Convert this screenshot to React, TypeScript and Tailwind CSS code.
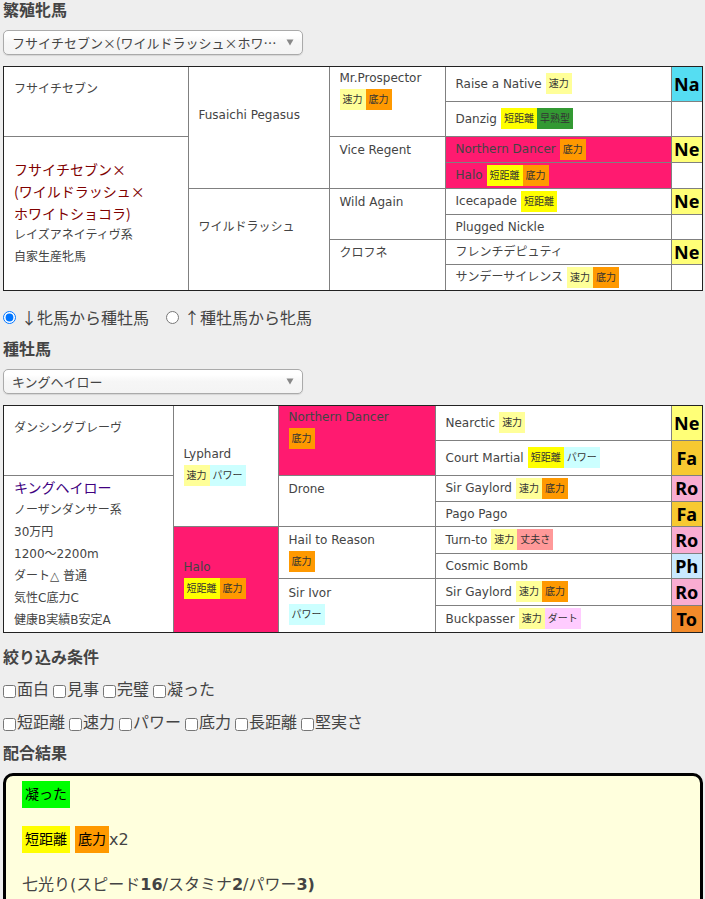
import { useState } from "react";

type Factor = '速力' | '底力' | '短距離' | '早熟型' | 'パワー' | '丈夫さ' | 'ダート';

type Ancestor = {
    name: string;
    factors?: Factor[];
    cross?: boolean;
};

type Row = Ancestor & {
    height: string;
    line?: string;
};

const factorColor: Record<Factor, string> = {
    '速力': 'bg-[#ffff99]',
    '底力': 'bg-[#ff9900]',
    '短距離': 'bg-[#ffff00]',
    '早熟型': 'bg-[#339933]',
    'パワー': 'bg-[#ccffff]',
    '丈夫さ': 'bg-[#ff9999]',
    'ダート': 'bg-[#ffccff]',
};

const lineColor: Record<string, string> = {
    Na: 'bg-[#55ddf2]',
    Ne: 'bg-[#ffff77]',
    Fa: 'bg-[#f7c931]',
    Ro: 'bg-[#f9add2]',
    Ph: 'bg-[#c9e9ff]',
    To: 'bg-[#f28a2a]',
};

const mareRows: Row[] = [
    { name: 'Raise a Native', factors: ['速力'], line: 'Na', height: 'h-[34px]' },
    { name: 'Danzig', factors: ['短距離', '早熟型'], height: 'h-[35px]' },
    { name: 'Northern Dancer', factors: ['底力'], cross: true, line: 'Ne', height: 'h-[26px]' },
    { name: 'Halo', factors: ['短距離', '底力'], cross: true, height: 'h-[26px]' },
    { name: 'Icecapade', factors: ['短距離'], line: 'Ne', height: 'h-[26px]' },
    { name: 'Plugged Nickle', height: 'h-[25px]' },
    { name: 'フレンチデピュティ', line: 'Ne', height: 'h-[25px]' },
    { name: 'サンデーサイレンス', factors: ['速力', '底力'], height: 'h-[26px]' },
];

const mareThird: Ancestor[] = [
    { name: 'Mr.Prospector', factors: ['速力', '底力'] },
    { name: 'Vice Regent' },
    { name: 'Wild Again' },
    { name: 'クロフネ' },
];

const mareSecond: Ancestor[] = [
    { name: 'Fusaichi Pegasus' },
    { name: 'ワイルドラッシュ' },
];

const sireRows: Row[] = [
    { name: 'Nearctic', factors: ['速力'], line: 'Ne', height: 'h-[34px]' },
    { name: 'Court Martial', factors: ['短距離', 'パワー'], line: 'Fa', height: 'h-[35px]' },
    { name: 'Sir Gaylord', factors: ['速力', '底力'], line: 'Ro', height: 'h-[26px]' },
    { name: 'Pago Pago', line: 'Fa', height: 'h-[25px]' },
    { name: 'Turn-to', factors: ['速力', '丈夫さ'], line: 'Ro', height: 'h-[27px]' },
    { name: 'Cosmic Bomb', line: 'Ph', height: 'h-[25px]' },
    { name: 'Sir Gaylord', factors: ['速力', '底力'], line: 'Ro', height: 'h-[27px]' },
    { name: 'Buckpasser', factors: ['速力', 'ダート'], line: 'To', height: 'h-[27px]' },
];

const sireThird: Ancestor[] = [
    { name: 'Northern Dancer', factors: ['底力'], cross: true },
    { name: 'Drone' },
    { name: 'Hail to Reason', factors: ['底力'] },
    { name: 'Sir Ivor', factors: ['パワー'] },
];

const sireSecond: Ancestor[] = [
    { name: 'Lyphard', factors: ['速力', 'パワー'] },
    { name: 'Halo', factors: ['短距離', '底力'], cross: true },
];

function Factors({ list }: { list?: Factor[] }) {
    return (
        <span className="flex">
            {list?.map((f) => (
                <span key={f} className={'h-[21px] px-[3px] text-[10px] leading-[21px] text-[#333] ' + factorColor[f]}>{f}</span>
            ))}
        </span>
    );
}

function AncestorCell({ data, span, tall }: { data: Ancestor; span: number; tall?: boolean }) {
    return (
        <td rowSpan={span} className={'border border-[#808080] py-0 pl-[10px] pr-0 align-middle ' + (data.cross ? 'bg-[#ff1a70]' : 'bg-white')}>
            <div className={tall ? 'h-[68px]' : 'h-[46px]'}>
                <div>{data.name}</div>
                <Factors list={data.factors} />
            </div>
        </td>
    );
}

type PedigreeProps = {
    label: string;
    father: string;
    rows: Row[];
    second: Ancestor[];
    third: Ancestor[];
    cols: string[];
    children: React.ReactNode;
};

function Pedigree({ label, father, rows, second, third, cols, children }: PedigreeProps) {
    return (
        <div className="border border-[#222] bg-white">
            <table aria-label={label} className="w-full table-fixed border-collapse border-hidden text-xs leading-[22px]">
                <colgroup>
                    {cols.map((c, i) => <col key={i} className={c} />)}
                </colgroup>
                <tbody>
                    {rows.map((row, i) => (
                        <tr key={i} className={row.height}>
                            {i === 0 && <AncestorCell data={{ name: father }} span={2} />}
                            {i === 2 && (
                                <td rowSpan={6} className="border border-[#808080] py-0 pl-[10px] pr-0 align-middle">{children}</td>
                            )}
                            {i % 4 === 0 && <AncestorCell data={second[i / 4]} span={4} />}
                            {i % 2 === 0 && <AncestorCell data={third[i / 2]} span={2} tall={i === 0} />}
                            <td className={'border border-[#808080] py-0 pl-[10px] pr-0 ' + (row.cross ? 'bg-[#ff1a70]' : '')}>
                                <div className="flex items-center gap-1">
                                    <span>{row.name}</span>
                                    <Factors list={row.factors} />
                                </div>
                            </td>
                            <td className={'border border-[#808080] p-0 text-center font-["Noto_Sans",sans-serif] text-lg leading-[22px] font-bold text-black ' + (row.line ? lineColor[row.line] : '')}>
                                {row.line}
                            </td>
                        </tr>
                    ))}
                </tbody>
            </table>
        </div>
    );
}

function HorseSelect({ label, options }: { label: string; options: string[] }) {
    return (
        <div className="relative mt-2 mb-[11px] h-[25px] w-[300px]">
            <select aria-label={label} className='h-full w-full appearance-none rounded-[5px] border border-[#aaa] bg-linear-to-b from-white from-20% via-[#f6f6f6] via-50% to-[#f4f4f4] pl-2 pr-5 font-["Noto_Sans_CJK_JP",sans-serif] text-[13px] text-[#444] shadow-[0_1px_1px_rgba(0,0,0,0.1)]'>
                {options.map((o) => <option key={o}>{o}</option>)}
            </select>
            <svg className="pointer-events-none absolute top-[9px] right-[9px]" width="8" height="7" viewBox="0 0 8 7">
                <path d="M0.5 0.5H7.5L4 6.5Z" fill="#888" />
            </svg>
        </div>
    );
}

function Checks({ items }: { items: string[] }) {
    return (
        <div className="flex flex-wrap gap-x-1">
            {items.map((item) => (
                <label key={item} className="flex items-center gap-px">
                    <input type="checkbox" className="m-0 mt-[2px] h-[13px] w-[13px]" />
                    {item}
                </label>
            ))}
        </div>
    );
}

export default function App() {
    const [direction, setDirection] = useState('down');

    return (
        <div className='min-h-screen bg-[#eee] pr-[2px] pb-4 pl-[3px] font-["DejaVu_Sans","Noto_Sans_CJK_JP",sans-serif] text-base leading-6 text-[#444]' lang="ja">
            <h2 className="leading-[22px] font-bold">繁殖牝馬</h2>
            <HorseSelect label="繁殖牝馬" options={['フサイチセブン×(ワイルドラッシュ×ホワ…']} />
            <Pedigree
                label="繁殖牝馬の血統表"
                father="フサイチセブン"
                rows={mareRows}
                second={mareSecond}
                third={mareThird}
                cols={['w-[184px]', 'w-[141px]', 'w-[116px]', 'w-auto', 'w-[31px]']}
            >
                <div className='font-["Noto_Sans_CJK_JP",sans-serif] text-sm leading-[22px] text-[#800000]'>
                    フサイチセブン×<br />(ワイルドラッシュ×<br />ホワイトショコラ)
                </div>
                <div>レイズアネイティヴ系</div>
                <div>自家生産牝馬</div>
            </Pedigree>

            <div className='mt-[14px] flex gap-[17px] font-["Noto_Sans_CJK_JP",sans-serif]'>
                <label className="flex items-center gap-[5px]">
                    <input type="radio" name="direction" className="m-0 h-[13px] w-[13px]" checked={direction === 'down'} onChange={() => setDirection('down')} />
                    ↓牝馬から種牡馬
                </label>
                <label className="flex items-center gap-[5px]">
                    <input type="radio" name="direction" className="m-0 h-[13px] w-[13px]" checked={direction === 'up'} onChange={() => setDirection('up')} />
                    ↑種牡馬から牝馬
                </label>
            </div>

            <h2 className="mt-[10px] leading-[22px] font-bold">種牡馬</h2>
            <HorseSelect label="種牡馬" options={['キングヘイロー']} />
            <Pedigree
                label="種牡馬の血統表"
                father="ダンシングブレーヴ"
                rows={sireRows}
                second={sireSecond}
                third={sireThird}
                cols={['w-[169px]', 'w-[105px]', 'w-[157px]', 'w-auto', 'w-[31px]']}
            >
                <div className="text-sm leading-[22px] text-[#400080]">キングヘイロー</div>
                <div>ノーザンダンサー系</div>
                <div>30万円</div>
                <div>1200～2200m</div>
                <div>ダート△ 普通</div>
                <div>気性C底力C</div>
                <div>健康B実績B安定A</div>
            </Pedigree>

            <h2 className="mt-[14px] leading-[22px] font-bold">絞り込み条件</h2>
            <div className="mt-[9px] flex flex-col gap-[9px]">
                <Checks items={['面白', '見事', '完璧', '凝った']} />
                <Checks items={['短距離', '速力', 'パワー', '底力', '長距離', '堅実さ']} />
            </div>

            <h2 className="mt-2 leading-[22px] font-bold">配合結果</h2>
            <div className="mt-2 flex flex-col gap-[18px] rounded-[10px] border-[3px] border-black bg-[#ffffdd] px-4 pt-[5px] pb-4 leading-[27px]">
                <p className="flex">
                    <span className="bg-[#00ff00] px-[3px] text-sm leading-[27px] text-black">凝った</span>
                </p>
                <p className="flex">
                    <span className="mr-[5px] bg-[#ffff00] px-[3px] text-sm leading-[27px] text-black">短距離</span>
                    <span className="bg-[#ff9900] px-[3px] text-sm leading-[27px] text-black">底力</span>
                    x2
                </p>
                <p>
                    七光り(スピード<b>16</b>/スタミナ<b>2</b>/パワー<b>3)</b>
                </p>
            </div>
        </div>
    );
}
